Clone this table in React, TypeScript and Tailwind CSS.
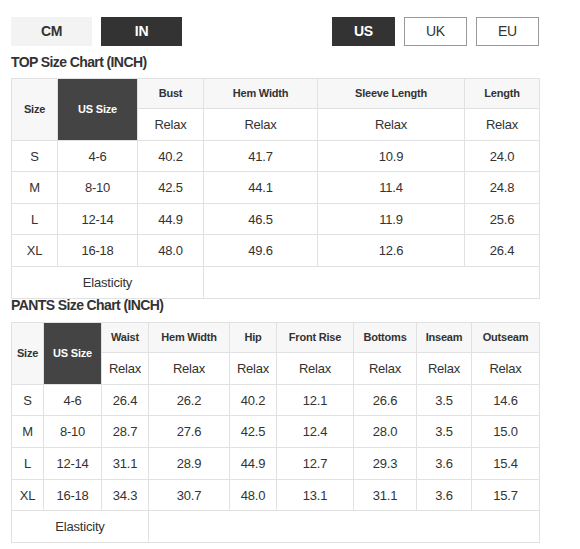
import React from "react";

const FONT = { fontFamily: '"Liberation Sans", Arial, Helvetica, sans-serif' };

function H({ children, className = "" }: { children?: React.ReactNode; className?: string }) {
  return (
    <div
      className={
        "flex items-center justify-center text-center bg-[#f7f7f7] text-[#333] text-[11px] font-bold tracking-[-0.2px] leading-none " +
        className
      }
    >
      {children}
    </div>
  );
}

function D({ children, className = "" }: { children?: React.ReactNode; className?: string }) {
  return (
    <div
      className={
        "flex items-center justify-center text-center bg-white text-[#333] text-[13px] tracking-[-0.2px] leading-none " +
        className
      }
    >
      {children}
    </div>
  );
}

function Dark({ children, className = "" }: { children?: React.ReactNode; className?: string }) {
  return (
    <div
      className={
        "flex items-center justify-center text-center bg-[#444444] text-white text-[11px] font-bold tracking-[-0.2px] leading-none " +
        className
      }
    >
      {children}
    </div>
  );
}

const topRows = [
  ["S", "4-6", "40.2", "41.7", "10.9", "24.0"],
  ["M", "8-10", "42.5", "44.1", "11.4", "24.8"],
  ["L", "12-14", "44.9", "46.5", "11.9", "25.6"],
  ["XL", "16-18", "48.0", "49.6", "12.6", "26.4"],
];

const pantsRows = [
  ["S", "4-6", "26.4", "26.2", "40.2", "12.1", "26.6", "3.5", "14.6"],
  ["M", "8-10", "28.7", "27.6", "42.5", "12.4", "28.0", "3.5", "15.0"],
  ["L", "12-14", "31.1", "28.9", "44.9", "12.7", "29.3", "3.6", "15.4"],
  ["XL", "16-18", "34.3", "30.7", "48.0", "13.1", "31.1", "3.6", "15.7"],
];

export default function App() {
  return (
    <div className="w-[580px] h-[549px] bg-white pl-[11px] pt-[17px]" style={FONT}>
      {/* Buttons */}
      <div className="flex w-[528px] h-[29px]">
        <div className="flex gap-[9px]">
          <div className="w-[81px] h-[29px] bg-[#f3f3f3] text-[#333] flex items-center justify-center text-[14px] font-bold tracking-[-0.3px]">
            CM
          </div>
          <div className="w-[81px] h-[29px] bg-[#333333] text-white flex items-center justify-center text-[14px] font-bold tracking-[-0.3px]">
            IN
          </div>
        </div>
        <div className="ml-auto flex gap-[9px]">
          <div className="w-[63px] h-[29px] bg-[#333333] text-white flex items-center justify-center text-[14px] font-bold tracking-[-0.3px]">
            US
          </div>
          <div className="w-[63px] h-[29px] bg-white border border-[#999] text-[#333] flex items-center justify-center text-[14px] tracking-[-0.3px]">
            UK
          </div>
          <div className="w-[63px] h-[29px] bg-white border border-[#999] text-[#333] flex items-center justify-center text-[14px] tracking-[-0.3px]">
            EU
          </div>
        </div>
      </div>

      {/* TOP title */}
      <div className="h-[32px] flex items-center text-[14px] font-bold text-[#333] tracking-[-0.6px]">
        TOP Size Chart (INCH)
      </div>

      {/* TOP table */}
      <div className="w-[529px] grid gap-px p-px bg-[#e1e1e1] grid-cols-[45px_79px_65px_113px_146px_74px] grid-rows-[29px_31px_30px_31px_30px_31px_31px]">
        <H className="row-span-2">Size</H>
        <Dark className="row-span-2">US Size</Dark>
        <H>Bust</H>
        <H>Hem Width</H>
        <H>Sleeve Length</H>
        <H>Length</H>
        <D>Relax</D>
        <D>Relax</D>
        <D>Relax</D>
        <D>Relax</D>
        {topRows.map((r) => r.map((c, i) => <D key={r[0] + i}>{c}</D>))}
        <D className="col-span-3">Elasticity</D>
        <D className="col-span-3" />
      </div>

      {/* PANTS title */}
      <div className="h-[23px] text-[14px] font-bold text-[#333] tracking-[-0.6px] leading-[12px]">
        PANTS Size Chart (INCH)
      </div>

      {/* PANTS table */}
      <div className="w-[529px] grid gap-px p-px bg-[#e1e1e1] grid-cols-[31px_57px_46px_80px_46px_76px_62px_54px_67px] grid-rows-[29px_31px_30px_31px_31px_30px_31px]">
        <H className="row-span-2">Size</H>
        <Dark className="row-span-2">US Size</Dark>
        <H>Waist</H>
        <H>Hem Width</H>
        <H>Hip</H>
        <H>Front Rise</H>
        <H>Bottoms</H>
        <H>Inseam</H>
        <H>Outseam</H>
        {Array.from({ length: 7 }).map((_, i) => (
          <D key={"rx" + i}>Relax</D>
        ))}
        {pantsRows.map((r) => r.map((c, i) => <D key={"p" + r[0] + i}>{c}</D>))}
        <D className="col-span-3">Elasticity</D>
        <D className="col-span-6" />
      </div>
    </div>
  );
}
